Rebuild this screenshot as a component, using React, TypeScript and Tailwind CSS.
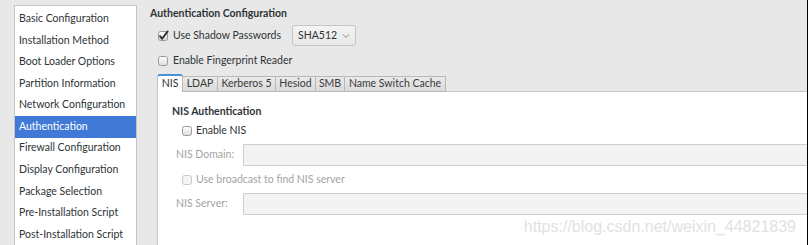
import React from "react";

const Box = ({ checked = false, disabled = false }: { checked?: boolean; disabled?: boolean }) => (
  <svg width="12" height="12" viewBox="0 0 12 12" className="shrink-0 overflow-visible">
    <defs>
      <linearGradient id="cbg" x1="0" y1="0" x2="0" y2="1">
        <stop offset="0" stopColor="#ffffff" />
        <stop offset="1" stopColor="#dcdcdc" />
      </linearGradient>
    </defs>
    <rect
      x="1.5"
      y="1.5"
      width="9"
      height="9"
      rx="2.2"
      fill={disabled ? "#f4f4f4" : "url(#cbg)"}
      stroke={disabled ? "#c8c8c8" : "#9a9a9a"}
      strokeWidth="1"
    />
    {checked && (
      <path d="M3 6.2 L5.2 8.8 L10.6 1.4" stroke="#2e3436" strokeWidth="1.9" fill="none" strokeLinecap="round" strokeLinejoin="round" />
    )}
  </svg>
);

const items = [
  "Basic Configuration",
  "Installation Method",
  "Boot Loader Options",
  "Partition Information",
  "Network Configuration",
  "Authentication",
  "Firewall Configuration",
  "Display Configuration",
  "Package Selection",
  "Pre-Installation Script",
  "Post-Installation Script",
];

const tabs = ["NIS", "LDAP", "Kerberos 5", "Hesiod", "SMB", "Name Switch Cache"];
const tabW = [26, 36, 59, 41, 30, 102];

export default function App() {
  return (
    <div
      className="relative flex h-[245px] w-[808px] overflow-hidden border-r border-black bg-[#e8e8e8] text-[10.5px] text-[#2e3436]"
      style={{ fontFamily: "Lato, 'Liberation Sans', sans-serif" }}
    >
      {/* sidebar */}
      <div className="flex h-full shrink-0 pl-[14px] pt-[5px]">
        <div className="h-full w-[123px] border border-b-0 border-[#c4c4c4] bg-white pt-[2px]">
          {items.map((t, i) => (
            <div
              key={t}
              className={
                i === 5
                  ? "flex h-[21.6px] items-center bg-[#4079d6] pl-[4px] text-white"
                  : "flex h-[21.6px] items-center pl-[4px]"
              }
            >
              {t}
            </div>
          ))}
        </div>
      </div>

      {/* main */}
      <div className="flex flex-1 flex-col pl-[13px] pt-[6px]">
        <div className="h-[14px] font-bold leading-[14px]">Authentication Configuration</div>

        <div className="mt-[5px] flex h-[21px] items-center pl-[7px]">
          <Box checked />
          <span className="ml-[4px]">Use Shadow Passwords</span>
          <div className="ml-[11px] flex h-[21px] w-[64px] items-center rounded-[3px] border border-[#c6c6c6] bg-gradient-to-b from-[#f4f4f4] to-[#e8e8e8] pl-[5px]">
            <span>SHA512</span>
            <svg width="8" height="6" viewBox="0 0 8 6" className="ml-[5px]">
              <path d="M1 1.5 L4 4.5 L7 1.5" stroke="#8a8a8a" strokeWidth="1" fill="none" />
            </svg>
          </div>
        </div>

        <div className="mt-[8px] flex h-[14px] items-center pl-[7px]">
          <Box />
          <span className="ml-[4px]">Enable Fingerprint Reader</span>
        </div>

        {/* tabs */}
        <div className="relative z-10 mt-[6px] -mb-px flex h-[18px] items-end pl-[7px]">
          {tabs.map((t, i) =>
            i === 0 ? (
              <div
                key={t}
                style={{ width: tabW[i] }}
                className="flex h-[18px] items-center justify-center rounded-t-[3px] border border-t-2 border-[#c0c0c0] border-t-[#4a90d9] border-b-white bg-white"
              >
                {t}
              </div>
            ) : (
              <div
                key={t}
                style={{ width: tabW[i] }}
                className="-ml-px flex h-[16px] items-center justify-center border border-[#b9b9b9] bg-gradient-to-b from-[#eaeaea] to-[#dadada] text-[#3a3a3a]"
              >
                {t}
              </div>
            )
          )}
        </div>

        <div className="ml-[7px] flex flex-1 flex-col border-l border-t border-[#c8c8c8] bg-white pl-[14px] pt-[12px]">
          <div className="h-[14px] font-bold leading-[14px]">NIS Authentication</div>

          <div className="mt-[6px] flex h-[14px] items-center pl-[9px]">
            <Box />
            <span className="ml-[3px]">Enable NIS</span>
          </div>

          <div className="mt-[6px] flex h-[22px] items-center pl-[4px]">
            <span className="w-[67px] text-[#a3a3a3]">NIS Domain:</span>
            <div className="h-[22px] flex-1 rounded-l-[2px] border border-r-0 border-[#cdcdcd] bg-[#f3f3f3]" />
          </div>

          <div className="mt-[7px] flex h-[14px] items-center pl-[9px]">
            <Box disabled />
            <span className="ml-[3px] text-[#a3a3a3]">Use broadcast to find NIS server</span>
          </div>

          <div className="mt-[6px] flex h-[22px] items-center pl-[4px]">
            <span className="w-[67px] text-[#a3a3a3]">NIS Server:</span>
            <div className="h-[22px] flex-1 rounded-l-[2px] border border-r-0 border-[#cdcdcd] bg-[#f3f3f3]" />
          </div>
        </div>
      </div>

      <div
        className="absolute bottom-[9px] right-[11px] text-[16px] leading-[18px] text-[#e2e2e2]"
        style={{ fontFamily: "'Liberation Sans', Arial, sans-serif" }}
      >
        https://blog.csdn.net/weixin_44821839
      </div>
    </div>
  );
}
